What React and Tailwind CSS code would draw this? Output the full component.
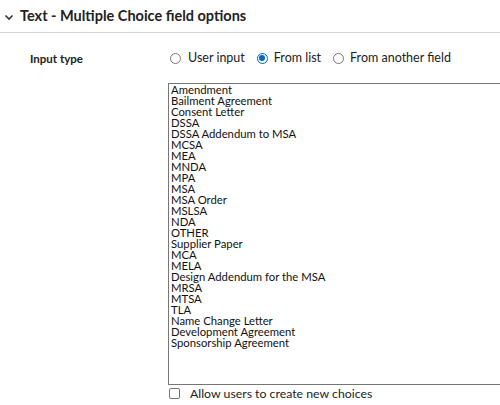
import React from "react";

const items = [
  "Amendment",
  "Bailment Agreement",
  "Consent Letter",
  "DSSA",
  "DSSA Addendum to MSA",
  "MCSA",
  "MEA",
  "MNDA",
  "MPA",
  "MSA",
  "MSA Order",
  "MSLSA",
  "NDA",
  "OTHER",
  "Supplier Paper",
  "MCA",
  "MELA",
  "Design Addendum for the MSA",
  "MRSA",
  "MTSA",
  "TLA",
  "Name Change Letter",
  "Development Agreement",
  "Sponsorship Agreement",
];

function Radio({ checked }) {
  return (
    <span
      className={
        "flex h-[11px] w-[11px] shrink-0 items-center justify-center rounded-full border " +
        (checked ? "border-[#0067c0]" : "border-[#767676]")
      }
    >
      {checked && <span className="h-[6px] w-[6px] rounded-full bg-[#0067c0]" />}
    </span>
  );
}

export default function App() {
  return (
    <div className="h-[405px] w-[500px] overflow-hidden bg-white font-['Lato',sans-serif] text-[#222]">
      <div className="flex h-[33px] items-center border-b border-[#d4d4d4] pl-[4px]">
        <svg width="10" height="10" viewBox="0 0 10 10" className="mr-[6px] mt-[1px] shrink-0">
          <path d="M1.5 3.5 L5 7 L8.5 3.5" fill="none" stroke="#333" strokeWidth="1.6" />
        </svg>
        <span className="text-[14.5px] font-bold leading-none text-[#222]">
          Text - Multiple Choice field options
        </span>
      </div>
      <div className="flex pt-[16px]">
        <div className="w-[168px] shrink-0 pl-[30px] pt-[1px] text-[11.5px] font-bold leading-[18px] text-[#222]">
          Input type
        </div>
        <div className="flex min-w-0 flex-1 flex-col">
          <div className="flex h-[18px] items-center whitespace-nowrap pl-[2px] text-[12.5px] text-[#222]">
            <Radio />
            <span className="ml-[7px]">User input</span>
            <span className="ml-[12px]"><Radio checked /></span>
            <span className="ml-[6px]">From list</span>
            <span className="ml-[12px]"><Radio /></span>
            <span className="ml-[6px]">From another field</span>
          </div>
          <div className="mt-[16px] h-[302px] w-[340px] shrink-0 border border-[#767676] px-[2px] text-[11.3px] leading-[11px] text-[#111]">
            {items.map((t) => (
              <div key={t} className="whitespace-nowrap">{t}</div>
            ))}
          </div>
          <div className="mt-[1px] flex items-center pl-[1px] text-[12.3px] text-[#222]">
            <span className="h-[11px] w-[11px] shrink-0 rounded-[2px] border border-[#767676]" />
            <span className="ml-[10px] leading-[15px]">Allow users to create new choices</span>
          </div>
        </div>
      </div>
    </div>
  );
}
